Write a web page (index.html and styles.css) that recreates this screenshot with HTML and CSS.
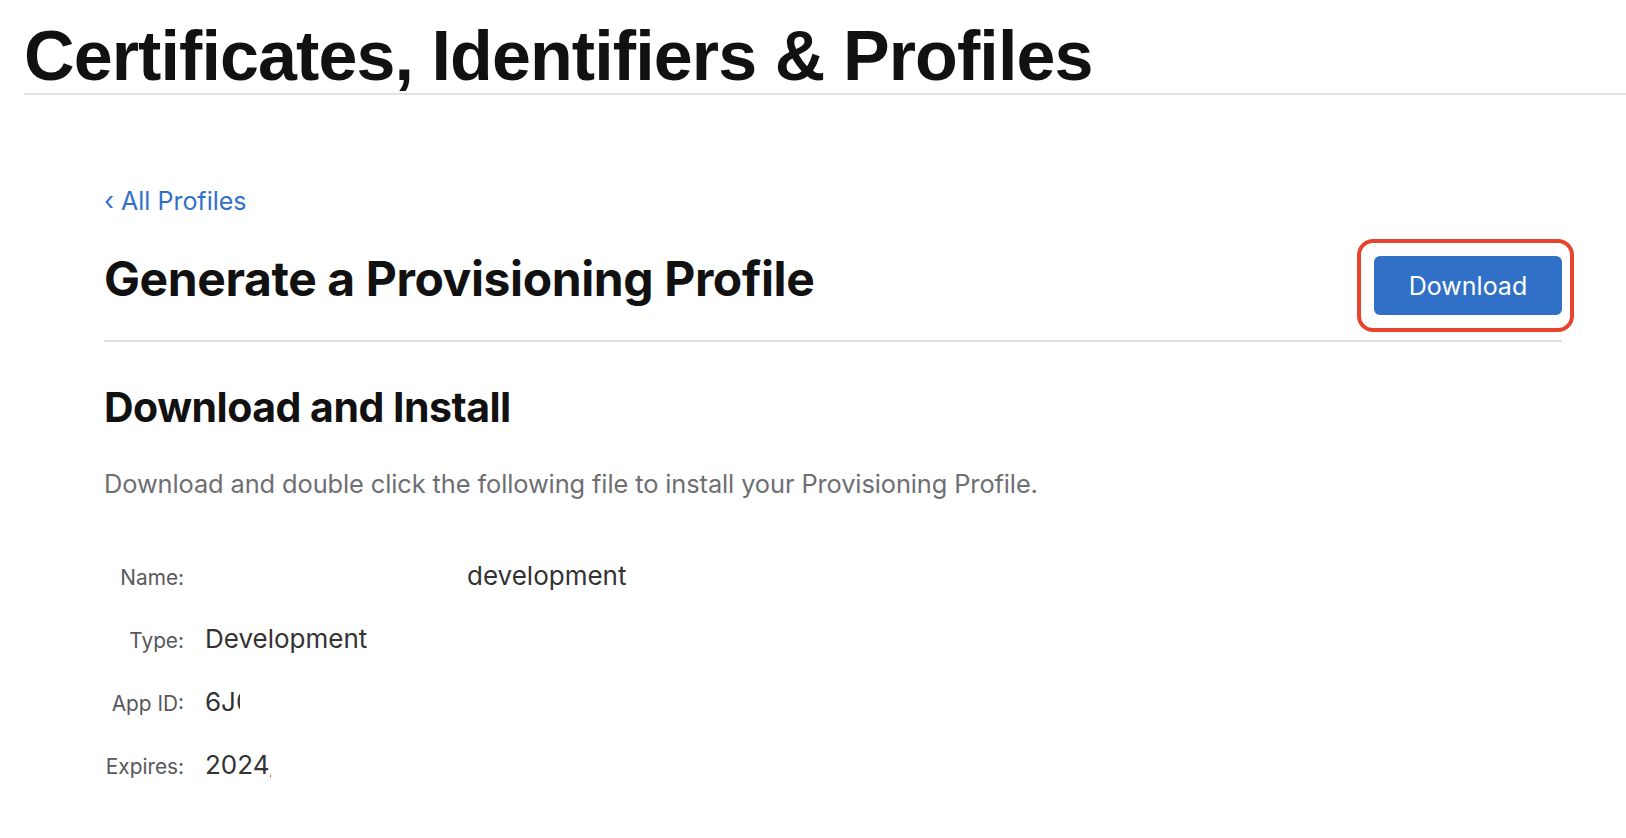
FILE: index.html
```html
<!DOCTYPE html>
<html lang="en">
<head>
<meta charset="utf-8">
<title>Certificates, Identifiers &amp; Profiles</title>
<link rel="stylesheet" href="styles.css">
</head>
<body>
<header class="top">
  <h1 class="top-title">Certificates, Identifiers &amp; Profiles</h1>
</header>
<main class="content">
  <a class="back" href="#"><span class="chev">‹</span> All Profiles</a>
  <div class="head-row">
    <h2 class="page-title">Generate a Provisioning Profile</h2>
    <div class="btn-ring"><button class="btn">Download</button></div>
  </div>
  <section class="section">
    <h3 class="section-title">Download and Install</h3>
    <p class="desc">Download and double click the following file to install your Provisioning Profile.</p>
    <dl class="details">
      <div class="row"><dt>Name:</dt><dd><span class="name-val">development</span></dd></div>
      <div class="row"><dt>Type:</dt><dd>Development</dd></div>
      <div class="row"><dt>App ID:</dt><dd><span class="clip clip-id">6J0</span></dd></div>
      <div class="row"><dt>Expires:</dt><dd><span class="clip clip-date">2024/</span></dd></div>
    </dl>
  </section>
</main>
</body>
</html>
```

FILE: styles.css
```css
* { box-sizing: border-box; }
html, body { margin: 0; padding: 0; background: #fff; }
body { font-family: Inter, "Noto Sans", "Liberation Sans", sans-serif; color: #1d1d1f; }

.top { padding-left: 24px; }
.top-title {
  margin: 0;
  padding-top: 19px;
  font-family: "Liberation Sans", Arial, sans-serif;
  font-weight: 700;
  font-size: 70px;
  line-height: 74px;
  letter-spacing: -0.9px;
  color: #111;
  border-bottom: 2px solid #e2e2e2;
}

.content { padding: 0 64px 0 104px; }

.back {
  display: inline-block;
  margin-top: 91px;
  font-size: 25px;
  line-height: 30px;
  color: #3171c9;
  text-decoration: none;
}
.back .chev { font-size: 26px; }

.head-row {
  display: flex;
  align-items: flex-start;
  justify-content: space-between;
  margin-top: 23px;
  padding-bottom: 8px;
  border-bottom: 2px solid #dedede;
}
.page-title {
  margin: 11px 0 0;
  font-size: 48px;
  font-weight: 700;
  line-height: 58px;
  letter-spacing: -0.4px;
  color: #111;
}
.btn-ring {
  margin-right: -12px;
  padding: 13px 8px 13px 13px;
  border: 4px solid #e8442c;
  border-radius: 16px;
}
.btn {
  display: block;
  width: 188px;
  height: 59px;
  border: 0;
  border-radius: 6px;
  background: #3170c7;
  color: #fff;
  font-family: Inter, "Noto Sans", sans-serif;
  font-size: 25px;
  font-weight: 400;
}

.section-title {
  margin: 41px 0 0;
  font-size: 41px;
  font-weight: 700;
  line-height: 48px;
  color: #111;
  letter-spacing: -0.5px;
}
.desc {
  margin: 38px 0 0;
  font-size: 25.4px;
  line-height: 30px;
  color: #6e6e73;
  letter-spacing: -0.1px;
}

.details { margin: 45px 0 0; }
.row {
  display: flex;
  align-items: baseline;
  height: 63px;
  line-height: 63px;
}
.row dt {
  width: 80px;
  text-align: right;
  font-size: 20.8px;
  color: #58585c;
}
.row dd {
  margin: 0 0 0 21px;
  font-size: 26px;
  color: #333;
}
.name-val { margin-left: 262px; }
.clip {
  display: inline-block;
  vertical-align: top;
  overflow: hidden;
  white-space: nowrap;
}
.clip-id { width: 35px; }
.clip-date { width: 66px; }
```
